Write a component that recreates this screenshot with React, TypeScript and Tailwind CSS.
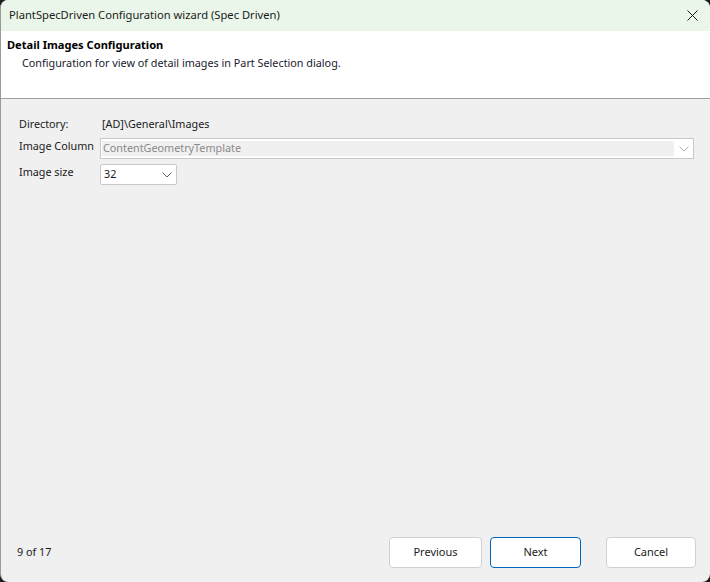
import React from 'react';

const font = { fontFamily: '"Noto Sans", "Open Sans", sans-serif' };

const Chevron = ({ color = '#606060' }: { color?: string }) => (
  <svg width="10" height="6" viewBox="0 0 10 6" fill="none">
    <path d="M0.5 0.5 L5 5 L9.5 0.5" stroke={color} strokeWidth="1" />
  </svg>
);

const WizardButton = ({ label, primary }: { label: string; primary?: boolean }) => (
  <button
    type="button"
    className={`h-[31px] rounded-[4px] bg-white text-[11px] text-[#1a1a1a] ${
      primary ? 'border border-[#0067c0]' : 'border border-[#d0d0d0]'
    }`}
  >
    {label}
  </button>
);

export default function App() {
  return (
    <div className="h-[582px] w-[710px] bg-[#1c1c1c]" style={font}>
      <div className="flex h-full flex-col overflow-hidden rounded-[8px] border-l border-[#9a9a9a] bg-[#f0f0f0]">
        {/* Title bar */}
        <div className="flex h-[31px] items-center justify-between bg-[#e9f6e9] pl-[8px] pr-[12px]">
          <span className="text-[11.2px] text-[#1a1a1a]">PlantSpecDriven Configuration wizard (Spec Driven)</span>
          <svg width="11" height="11" viewBox="0 0 11 11">
            <path d="M0.5 0.5 L10.5 10.5 M10.5 0.5 L0.5 10.5" stroke="#1a1a1a" strokeWidth="1" />
          </svg>
        </div>

        {/* Header */}
        <div className="h-[68px] border-b border-[#a0a0a0] bg-white pl-[6px] pt-[6px]">
          <div className="text-[11.1px] font-bold leading-[16px] text-black">Detail Images Configuration</div>
          <div className="pl-[15px] pt-[2px] text-[10.8px] leading-[16px] text-[#1a1a2e]">
            Configuration for view of detail images in Part Selection dialog.
          </div>
        </div>

        {/* Content */}
        <div className="flex flex-1 flex-col pl-[18px] pr-[14px] pt-[16px] text-[10.8px] text-[#1a1a1a]">
          <div className="mr-[2px] grid grid-cols-[81px_1fr] items-center gap-y-[5px]">
            <span className="whitespace-nowrap leading-[18px]">Directory:</span>
            <span className="pl-[2px] leading-[18px]">[AD]\General\Images</span>

            <span className="self-start whitespace-nowrap">Image Column</span>
            <div className="flex h-[21px] items-center border border-[#c8c8c8] bg-white pl-[1px]">
              <div className="flex h-[15px] flex-1 items-center bg-[#f0f0f0] pl-[1px] text-[#8a8a8a]">
                ContentGeometryTemplate
              </div>
              <div className="flex w-[19px] justify-center">
                <Chevron color="#b0b0b0" />
              </div>
            </div>

            <span className="self-start whitespace-nowrap">Image size</span>
            <div className="flex h-[21px] w-[77px] items-center justify-between rounded-[2px] border border-[#c8c8c8] bg-white pl-[3px] pr-[4px]">
              <span>32</span>
              <Chevron />
            </div>
          </div>

          <div className="flex-1" />

          {/* Footer */}
          <div className="flex items-center pb-[14px]">
            <span className="-ml-[2px] flex-1">9 of 17</span>
            <div className="grid grid-cols-[93px_91px] gap-[8px]">
              <WizardButton label="Previous" />
              <WizardButton label="Next" primary />
            </div>
            <div className="ml-[25px] grid w-[90px]">
              <WizardButton label="Cancel" />
            </div>
          </div>
        </div>
      </div>
    </div>
  );
}
